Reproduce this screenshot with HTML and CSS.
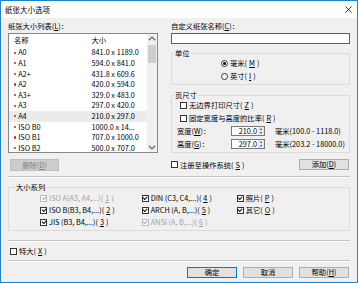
FILE: index.html
```html
<!DOCTYPE html>
<html lang="zh-CN">
<head>
    <meta charset="UTF-8">
    <title>纸张大小选项</title>
    <link rel="stylesheet" href="styles.css">
</head>
<body>
    <div class="window">
        <!-- Title bar -->
        <div class="titlebar">
            <span class="title">纸张大小选项</span>
            <svg class="close" viewBox="0 0 8 8"><path d="M0.5 0.5 L7.5 7.5 M7.5 0.5 L0.5 7.5"/></svg>
        </div>

        <div class="content">
            <div class="top">
                <!-- Paper size list -->
                <div class="left">
                    <div class="label">纸张大小列表(<u>L</u>)：</div>
                    <div class="listbox">
                        <div class="list">
                            <div class="row head"><span>名称</span><span>大小</span></div>
                            <div class="row"><span><i class="dot"></i>A0</span><span>841.0 x 1189.0</span></div>
                            <div class="row"><span><i class="dot"></i>A1</span><span>594.0 x 841.0</span></div>
                            <div class="row"><span><i class="dot"></i>A2+</span><span>431.8 x 609.6</span></div>
                            <div class="row"><span><i class="dot"></i>A2</span><span>420.0 x 594.0</span></div>
                            <div class="row"><span><i class="dot"></i>A3+</span><span>329.0 x 483.0</span></div>
                            <div class="row"><span><i class="dot"></i>A3</span><span>297.0 x 420.0</span></div>
                            <div class="row selected"><span><i class="dot"></i>A4</span><span>210.0 x 297.0</span></div>
                            <div class="row"><span><i class="dot"></i>ISO B0</span><span>1000.0 x 14...</span></div>
                            <div class="row"><span><i class="dot"></i>ISO B1</span><span>707.0 x 1000.0</span></div>
                            <div class="row"><span><i class="dot"></i>ISO B2</span><span>500.0 x 707.0</span></div>
                        </div>
                        <div class="scrollbar">
                            <svg class="arrow" viewBox="0 0 8 8"><path d="M1.5 5 L4 2.5 L6.5 5"/></svg>
                            <div class="track"><div class="thumb"></div></div>
                            <svg class="arrow" viewBox="0 0 8 8"><path d="M1.5 3 L4 5.5 L6.5 3"/></svg>
                        </div>
                    </div>
                    <div class="btn disabled delete">删除(<u>D</u>)</div>
                </div>

                <!-- Custom size -->
                <div class="right">
                    <div class="label">自定义纸张名称(<u>C</u>)：</div>
                    <div class="textbox"></div>

                    <fieldset class="group unit">
                        <legend>单位</legend>
                        <div class="opt"><span class="rb on"></span>毫米(<u>M</u>)</div>
                        <div class="opt"><span class="rb"></span>英寸(<u>I</u>)</div>
                    </fieldset>

                    <fieldset class="group page">
                        <legend>页尺寸</legend>
                        <div class="opt indent"><span class="cb"></span>无边界打印尺寸(<u>Z</u>)</div>
                        <div class="opt indent"><span class="cb"></span>固定宽度与高度的比率(<u>R</u>)</div>
                        <div class="size-row">
                            <span>宽度(<u>W</u>)：</span>
                            <span class="spin"><span class="value">210.0</span><span class="spinner"><i class="up"></i><i class="down"></i></span></span>
                            <span>毫米(100.0 - 1118.0)</span>
                        </div>
                        <div class="size-row">
                            <span>高度(<u>G</u>)：</span>
                            <span class="spin"><span class="value">297.0</span><span class="spinner"><i class="up"></i><i class="down"></i></span></span>
                            <span>毫米(203.2 - 18000.0)</span>
                        </div>
                    </fieldset>

                    <div class="register">
                        <div class="opt"><span class="cb"></span>注册至操作系统(<u>S</u>)</div>
                        <div class="btn add">添加(<u>D</u>)</div>
                    </div>
                </div>
            </div>

            <div class="sep"></div>

            <fieldset class="group series">
                <legend>大小系列</legend>
                <div class="series-grid">
                    <div class="opt off"><span class="cb on"></span>ISO A(A3, A4,...)(<u>1</u>)</div>
                    <div class="opt"><span class="cb on"></span>DIN (C3, C4,...)(<u>4</u>)</div>
                    <div class="opt"><span class="cb on"></span>照片(<u>P</u>)</div>
                    <div class="opt"><span class="cb on"></span>ISO B(B3, B4,...)(<u>2</u>)</div>
                    <div class="opt"><span class="cb on"></span>ARCH (A, B,...)(<u>5</u>)</div>
                    <div class="opt"><span class="cb on"></span>其它(<u>O</u>)</div>
                    <div class="opt"><span class="cb on"></span>JIS (B3, B4,...)(<u>3</u>)</div>
                    <div class="opt off"><span class="cb on"></span>ANSI (A, B,...)(<u>6</u>)</div>
                </div>
            </fieldset>

            <div class="sep sep2"></div>
            <div class="opt extra"><span class="cb"></span>特大(<u>X</u>)</div>
            <div class="sep sep3"></div>

            <div class="buttons">
                <div class="btn default">确定</div>
                <div class="btn">取消</div>
                <div class="btn">帮助(<u>H</u>)</div>
            </div>
        </div>
    </div>
</body>
</html>
```

FILE: styles.css
```css
* { box-sizing: border-box; }
body { margin: 0; font-family: "Noto Sans CJK SC", "Noto Sans", sans-serif; font-size: 7.3px; color: #000; }
u { text-decoration: underline; text-underline-offset: 1px; }

.window { width: 358px; height: 283px; border: 1px solid #1883d7; background: #f0f0f0; display: flex; flex-direction: column; }

/* Title bar */
.titlebar { height: 17px; flex: none; background: #fff; display: flex; align-items: center; justify-content: space-between; padding: 0 5px 0 4px; }
.title { font-size: 7.5px; }
.close { width: 7px; height: 7px; stroke: #000; stroke-width: 0.9; fill: none; }

.content { padding: 3px 7px 0; display: flex; flex-direction: column; }
.top { display: grid; grid-template-columns: 150px 179px; column-gap: 13px; }
.label { line-height: 10px; height: 10px; }

/* List box */
.listbox { margin-top: 2px; height: 120px; border: 1px solid #828790; background: #fff; display: flex; }
.list { flex: 1; overflow: hidden; }
.row { display: grid; grid-template-columns: 77.5px auto; padding-left: 5px; height: 10.6px; line-height: 10.6px; white-space: nowrap; }
.row.head { height: 13.4px; line-height: 13.4px; }
.row.selected { background: #ebebeb; }
.dot { display: inline-block; width: 2.2px; height: 2.2px; border-radius: 50%; background: #e0141e; margin-right: 2px; vertical-align: 1.5px; }
.scrollbar { width: 10px; background: #f0f0f0; display: flex; flex-direction: column; }
.arrow { width: 10px; height: 10px; flex: none; stroke: #606060; stroke-width: 0.9; fill: none; }
.track { flex: 1; padding: 1px 1px; }
.thumb { height: 18px; background: #cdcdcd; }

/* Buttons */
.btn { height: 11px; width: 50px; background: #e1e1e1; border: 1px solid #adadad; display: flex; align-items: center; justify-content: center; line-height: 9px; }
.btn.default { border-color: #0078d7; }
.btn.disabled { background: #cccccc; border-color: #bfbfbf; color: #838383; }
.delete { margin-top: 6px; margin-left: 2px; width: 49px; height: 12px; }

/* Right side */
.textbox { margin-top: 2px; height: 11px; background: #fff; border: 1px solid #0078d7; }
.group { margin: 4px 0 0; padding: 0; border: 1px solid #dcdcdc; min-width: 0; }
.group legend { padding: 0 1px; margin-left: 2px; line-height: 10px; }
.opt { display: flex; align-items: center; gap: 2px; height: 10px; line-height: 10px; white-space: nowrap; }
.opt.off { color: #a0a0a0; }
.unit { padding: 0 0 3px 49px; display: flex; flex-direction: column; gap: 3px; }
.unit legend { margin-left: -47px; }
.page { margin-top: 5px; padding: 0 0 3px 5px; display: flex; flex-direction: column; gap: 3px; }
.page legend { margin-left: -3px; }
.opt.indent { margin-left: 3px; }
.size-row { display: grid; grid-template-columns: 44px 34px auto; column-gap: 10px; align-items: center; height: 10px; white-space: nowrap; }
.spin { height: 10px; background: #fff; border: 1px solid #7a7a7a; display: flex; }
.value { flex: 1; text-align: right; padding-right: 1px; line-height: 8px; }
.spinner { width: 6px; display: flex; flex-direction: column; background: #e8e8e8; }
.spinner i { flex: 1; display: flex; align-items: center; justify-content: center; }
.spinner i::after { content: ""; border-left: 1.5px solid transparent; border-right: 1.5px solid transparent; }
.spinner .up::after { border-bottom: 2px solid #404040; }
.spinner .down::after { border-top: 2px solid #404040; }
.register { margin-top: 6px; height: 11px; display: flex; align-items: center; justify-content: space-between; padding-right: 1px; }

/* Check boxes and radios */
.cb { width: 7px; height: 7px; flex: none; border: 1px solid #333; background: #fff; position: relative; }
.cb.on::after { content: ""; position: absolute; left: 0.8px; top: 0.6px; width: 3.4px; height: 1.8px; border-left: 1px solid #000; border-bottom: 1px solid #000; transform: rotate(-45deg); }
.off .cb { border-color: #bcbcbc; }
.off .cb.on::after { border-color: #a8a8a8; }
.rb { width: 7px; height: 7px; flex: none; border: 1px solid #333; border-radius: 50%; background: #fff; display: flex; align-items: center; justify-content: center; }
.rb.on::after { content: ""; width: 3px; height: 3px; border-radius: 50%; background: #000; }

/* Bottom part */
.sep { margin-top: 5px; height: 2px; border-top: 1px solid #c4c4c4; border-bottom: 1px solid #fff; }
.series { margin-top: 4px; padding: 1px 0 3px 31px; }
.series legend { margin-left: -25px; }
.series-grid { display: grid; grid-template-columns: 101.7px 95px auto; row-gap: 2px; }
.sep2 { margin-top: 9px; }
.extra { margin-top: 4px; padding-left: 2px; }
.sep3 { margin-top: 4px; }
.buttons { margin-top: 5px; display: flex; justify-content: flex-end; gap: 6px; padding-right: 1px; }
.buttons .btn { height: 10.5px; }
```
